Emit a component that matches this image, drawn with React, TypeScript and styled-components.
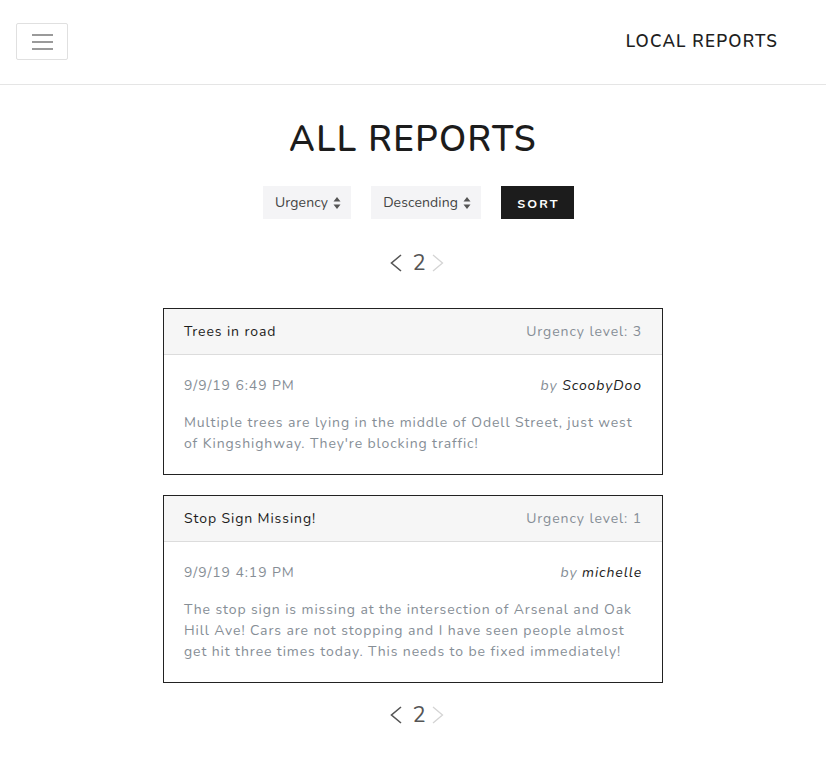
import styled, { createGlobalStyle } from "styled-components";

const GlobalStyle = createGlobalStyle`
  body {
    margin: 0;
    background: #fff;
    font-family: "Nunito", Lato, "Noto Sans", sans-serif;
    color: #222;
  }
`;

const Navbar = styled.nav`
  height: 84px;
  border-bottom: 1px solid #e5e5e5;
  display: flex;
  align-items: center;
  justify-content: space-between;
  padding: 0 48px 0 16px;
`;

const Toggler = styled.button`
  width: 52px;
  height: 37px;
  margin-top: -1px;
  background: #fff;
  border: 1px solid #e0e0e0;
  border-radius: 2px;
  display: flex;
  flex-direction: column;
  justify-content: center;
  align-items: center;
  gap: 5px;
  padding: 0;
  span {
    display: block;
    width: 21px;
    height: 2px;
    background: #9a9a9a;
  }
`;

const Brand = styled.div`
  font-size: 17px;
  font-weight: 600;
  letter-spacing: 1.2px;
  color: #1e1e1e;
  margin-top: -2px;
`;

const Main = styled.main`
  display: flex;
  flex-direction: column;
  align-items: center;
  padding-top: 36px;
`;

const Title = styled.h1`
  margin: 0;
  font-size: 35px;
  font-weight: 600;
  letter-spacing: 1.4px;
  line-height: 38px;
  color: #1c1c1c;
`;

const Controls = styled.div`
  display: flex;
  gap: 20px;
  margin: 27px 0 0 11px;
`;

const Select = styled.div`
  height: 33px;
  background: #f4f4f6;
  display: flex;
  align-items: center;
  gap: 5px;
  padding: 0 10px 0 12px;
  font-size: 14px;
  letter-spacing: 0.1px;
  color: #444;
`;

const SortButton = styled.button`
  height: 33px;
  width: 73px;
  border: none;
  background: #1c1c1c;
  color: #fff;
  font-family: inherit;
  font-weight: 700;
  font-size: 12.5px;
  letter-spacing: 2.2px;
  padding: 2px 0 0 2px;
`;

const Pager = styled.div<{ $top: number }>`
  display: flex;
  align-items: center;
  height: 30px;
  margin: ${(p) => p.$top}px 0 0 8px;
  font-size: 22px;
  color: #555;
  span {
    margin: 0 6px 0 10px;
  }
`;

const Cards = styled.div`
  width: 500px;
  display: flex;
  flex-direction: column;
  gap: 20px;
  margin-top: 30px;
`;

const Card = styled.section`
  border: 1px solid #222;
`;

const CardHeader = styled.header`
  height: 45px;
  background: #f6f6f6;
  border-bottom: 1px solid #dcdcdc;
  display: flex;
  align-items: center;
  justify-content: space-between;
  padding: 0 20px;
  font-size: 14px;
  letter-spacing: 0.9px;
  color: #1c1c1c;
`;

const Muted = styled.span`
  color: #868e96;
`;

const CardBody = styled.div`
  padding: 20px;
  font-size: 14px;
  letter-spacing: 0.9px;
  line-height: 21px;
`;

const MetaRow = styled.div`
  display: flex;
  justify-content: space-between;
  color: #868e96;
`;

const Author = styled.span`
  font-style: italic;
  b {
    font-weight: 400;
    color: #1c1c1c;
  }
`;

const Text = styled.p`
  margin: 16px 0 0;
  color: #868e96;
`;

const Arrows = () => (
  <svg width="8" height="12" viewBox="0 0 8 12">
    <path d="M4 0 L7.5 4.5 H0.5 Z M4 12 L7.5 7.5 H0.5 Z" fill="#555" />
  </svg>
);

const Chevron = ({ dir, color, w }: { dir: "l" | "r"; color: string; w: number }) => (
  <svg width="12" height="18" viewBox="0 0 12 18">
    <polyline
      points={dir === "l" ? "11,1 1.5,9 11,17" : "1,1 10.5,9 1,17"}
      fill="none"
      stroke={color}
      strokeWidth={w}
    />
  </svg>
);

const Pagination = ({ top }: { top: number }) => (
  <Pager $top={top}>
    <Chevron dir="l" color="#555" w={1.6} />
    <span>2</span>
    <Chevron dir="r" color="#d4d4d4" w={1.3} />
  </Pager>
);

const reports = [
  {
    title: "Trees in road",
    level: 3,
    date: "9/9/19 6:49 PM",
    author: "ScoobyDoo",
    text: "Multiple trees are lying in the middle of Odell Street, just west of Kingshighway. They're blocking traffic!",
  },
  {
    title: "Stop Sign Missing!",
    level: 1,
    date: "9/9/19 4:19 PM",
    author: "michelle",
    text: "The stop sign is missing at the intersection of Arsenal and Oak Hill Ave! Cars are not stopping and I have seen people almost get hit three times today. This needs to be fixed immediately!",
  },
];

export default function App() {
  return (
    <>
      <GlobalStyle />
      <Navbar>
        <Toggler>
          <span />
          <span />
          <span />
        </Toggler>
        <Brand>LOCAL REPORTS</Brand>
      </Navbar>
      <Main>
        <Title>ALL REPORTS</Title>
        <Controls>
          <Select>
            Urgency <Arrows />
          </Select>
          <Select>
            Descending <Arrows />
          </Select>
          <SortButton>SORT</SortButton>
        </Controls>
        <Pagination top={29} />
        <Cards>
          {reports.map((r) => (
            <Card key={r.title}>
              <CardHeader>
                <span>{r.title}</span>
                <Muted>Urgency level: {r.level}</Muted>
              </CardHeader>
              <CardBody>
                <MetaRow>
                  <span>{r.date}</span>
                  <Author>
                    by <b>{r.author}</b>
                  </Author>
                </MetaRow>
                <Text>{r.text}</Text>
              </CardBody>
            </Card>
          ))}
        </Cards>
        <Pagination top={17} />
      </Main>
    </>
  );
}
